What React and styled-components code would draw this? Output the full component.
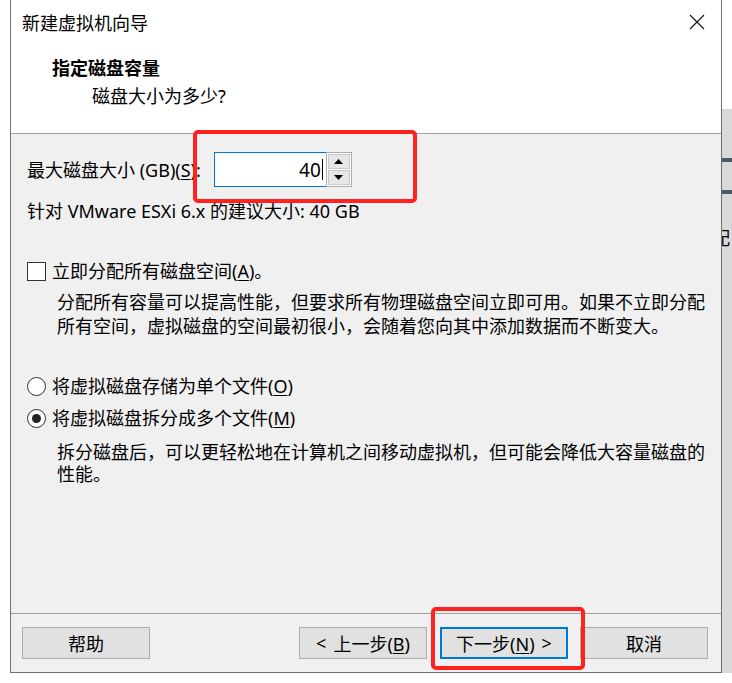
import styled, { createGlobalStyle } from "styled-components";

const GlobalStyle = createGlobalStyle`
  *, *::before, *::after {
    box-sizing: border-box;
  }
  html, body {
    margin: 0;
    padding: 0;
    background: #ffffff;
  }
  body {
    font-family: "Noto Sans", "Noto Sans CJK SC", sans-serif;
    color: #000;
  }
`;

const Page = styled.div`
  display: flex;
  width: 732px;
  height: 683px;
  overflow: hidden;
  background: #fff;
`;

const Gutter = styled.div`
  width: 10px;
  flex-shrink: 0;
`;

const Backdrop = styled.div`
  flex: 1;
  margin-top: 109px;
  height: 564px;
  background: #d9d9d9;
  display: flex;
  flex-direction: column;
  overflow: hidden;
`;

const BackBar = styled.div`
  height: 4px;
  margin-top: ${(p) => p.$gap}px;
  background: #4b5a68;
`;

const BackGlyph = styled.div`
  margin-top: 34px;
  margin-left: -10px;
  font-size: 18px;
  line-height: 20px;
  white-space: nowrap;
`;

const Dialog = styled.div`
  width: 712px;
  height: 673px;
  flex-shrink: 0;
  border-left: 1px solid #707070;
  border-right: 1px solid #707070;
  border-bottom: 1px solid #707070;
  display: flex;
  flex-direction: column;
  background: #f0f0f0;
`;

const Header = styled.div`
  height: 134px;
  background: #fff;
  border-bottom: 1px solid #a0a0a0;
  display: flex;
  flex-direction: column;
`;

const TitleBar = styled.div`
  height: 43px;
  display: flex;
  align-items: center;
  justify-content: space-between;
  padding-left: 11px;
  padding-right: 14px;
  font-size: 18px;
`;

const CloseBtn = styled.div`
  width: 20px;
  height: 20px;
  display: flex;
  align-items: center;
  justify-content: center;
`;

const HeadTitle = styled.div`
  margin-top: 14px;
  padding-left: 41px;
  font-size: 18px;
  font-weight: 700;
  line-height: 22px;
`;

const HeadSub = styled.div`
  margin-top: 6px;
  padding-left: 81px;
  font-size: 18px;
  line-height: 22px;
`;

const Body = styled.div`
  flex: 1;
  padding: 18px 10px 0 16px;
  display: flex;
  flex-direction: column;
  font-size: 18px;
  line-height: 22px;
  white-space: nowrap;
`;

const SizeRow = styled.div`
  display: flex;
  align-items: center;
  gap: 13px;
`;

const Spinner = styled.div`
  display: flex;
  height: 35px;
`;

const NumInput = styled.div`
  width: 112px;
  height: 35px;
  border: 1px solid #0078d7;
  border-right: 0;
  background: #fff;
  display: flex;
  align-items: center;
  justify-content: flex-end;
  padding-right: 3px;
  font-size: 19px;
`;

const Caret = styled.span`
  display: inline-block;
  width: 1px;
  height: 21px;
  background: #000;
  margin-left: 1px;
`;

const SpinCol = styled.div`
  display: flex;
  flex-direction: column;
  width: 26px;
  border: 1px solid #adadad;
  background: #fff;
  padding: 1px;
  gap: 1px;
`;

const SpinBtn = styled.div`
  flex: 1;
  background: #e6e6e6;
  border: 1px solid #c8c8c8;
  display: flex;
  align-items: center;
  justify-content: center;
`;

const Hint = styled.div`
  margin-top: 13px;
`;

const CheckRow = styled.label`
  display: flex;
  align-items: center;
  gap: 6px;
  margin-top: ${(p) => p.$top}px;
`;

const CheckBox = styled.span`
  width: 19px;
  height: 19px;
  border: 1px solid #333;
  background: #fff;
  flex-shrink: 0;
`;

const Radio = styled.span`
  width: 19px;
  height: 19px;
  border: 1px solid #333;
  border-radius: 50%;
  background: #fff;
  flex-shrink: 0;
  display: flex;
  align-items: center;
  justify-content: center;
  &::after {
    content: "";
    width: 9px;
    height: 9px;
    border-radius: 50%;
    background: #222;
    display: ${(p) => (p.$on ? "block" : "none")};
  }
`;

const Desc = styled.p`
  margin: ${(p) => p.$top}px 0 0 0;
  padding-left: 30px;
  line-height: ${(p) => p.$lh || 24}px;
`;

const Footer = styled.div`
  height: 59px;
  border-top: 1px solid #a0a0a0;
  display: flex;
  align-items: flex-start;
  padding: 13px 13px 0 11px;
`;

const Btn = styled.button`
  width: 128px;
  height: 32px;
  border: ${(p) => (p.$primary ? "2px solid #0078d7" : "1px solid #adadad")};
  background: #e1e1e1;
  font-family: "Noto Sans", "Noto Sans CJK SC", sans-serif;
  font-size: 18px;
  color: #000;
  padding: 0;
  margin-left: ${(p) => p.$gap || 0}px;
  display: flex;
  align-items: center;
  justify-content: center;
  gap: 7px;
`;

const Spacer = styled.div`
  flex: 1;
`;

const Mark = styled.div`
  position: absolute;
  border: 4px solid #ff2020;
  border-radius: 5px;
  pointer-events: none;
`;

const Layer = styled.div`
  position: relative;
`;

const U = styled.span`
  text-decoration: underline;
  text-underline-offset: 2px;
`;

const Arrow = ({ down }) => (
  <svg width="9" height="5" viewBox="0 0 9 5">
    {down ? <path d="M0 0h9L4.5 5z" fill="#000" /> : <path d="M0 5h9L4.5 0z" fill="#000" />}
  </svg>
);

export default function App() {
  return (
    <Layer>
      <GlobalStyle />
      <Page>
        <Gutter />
        <Dialog>
          <Header>
            <TitleBar>
              <span>新建虚拟机向导</span>
              <CloseBtn>
                <svg width="16" height="16" viewBox="0 0 16 16">
                  <path d="M1 1L15 15M15 1L1 15" stroke="#111" strokeWidth="1.1" />
                </svg>
              </CloseBtn>
            </TitleBar>
            <HeadTitle>指定磁盘容量</HeadTitle>
            <HeadSub>磁盘大小为多少?</HeadSub>
          </Header>
          <Body>
            <SizeRow>
              <span>
                最大磁盘大小 (GB)(<U>S</U>):
              </span>
              <Spinner>
                <NumInput>
                  40<Caret />
                </NumInput>
                <SpinCol>
                  <SpinBtn>
                    <Arrow />
                  </SpinBtn>
                  <SpinBtn>
                    <Arrow down />
                  </SpinBtn>
                </SpinCol>
              </Spinner>
            </SizeRow>
            <Hint>针对 VMware ESXi 6.x 的建议大小: 40 GB</Hint>
            <CheckRow $top={38}>
              <CheckBox />
              <span>
                立即分配所有磁盘空间(<U>A</U>)。
              </span>
            </CheckRow>
            <Desc $top={8}>
              分配所有容量可以提高性能，但要求所有物理磁盘空间立即可用。如果不立即分配
              <br />
              所有空间，虚拟磁盘的空间最初很小，会随着您向其中添加数据而不断变大。
            </Desc>
            <CheckRow $top={37}>
              <Radio />
              <span>
                将虚拟磁盘存储为单个文件(<U>O</U>)
              </span>
            </CheckRow>
            <CheckRow $top={10}>
              <Radio $on />
              <span>
                将虚拟磁盘拆分成多个文件(<U>M</U>)
              </span>
            </CheckRow>
            <Desc $top={12} $lh={22}>
              拆分磁盘后，可以更轻松地在计算机之间移动虚拟机，但可能会降低大容量磁盘的
              <br />
              性能。
            </Desc>
          </Body>
          <Footer>
            <Btn>帮助</Btn>
            <Spacer />
            <Btn>
              <span>&lt;</span>
              <span>
                上一步(<U>B</U>)
              </span>
            </Btn>
            <Btn $primary $gap={13}>
              <span>
                下一步(<U>N</U>)
              </span>
              <span>&gt;</span>
            </Btn>
            <Btn $gap={12}>取消</Btn>
          </Footer>
        </Dialog>
        <Backdrop>
          <BackBar $gap={49} />
          <BackBar $gap={28} />
          <BackGlyph>配</BackGlyph>
        </Backdrop>
      </Page>
      <Mark style={{ left: 193, top: 130, width: 224, height: 73 }} />
      <Mark style={{ left: 431, top: 607, width: 154, height: 63 }} />
    </Layer>
  );
}
